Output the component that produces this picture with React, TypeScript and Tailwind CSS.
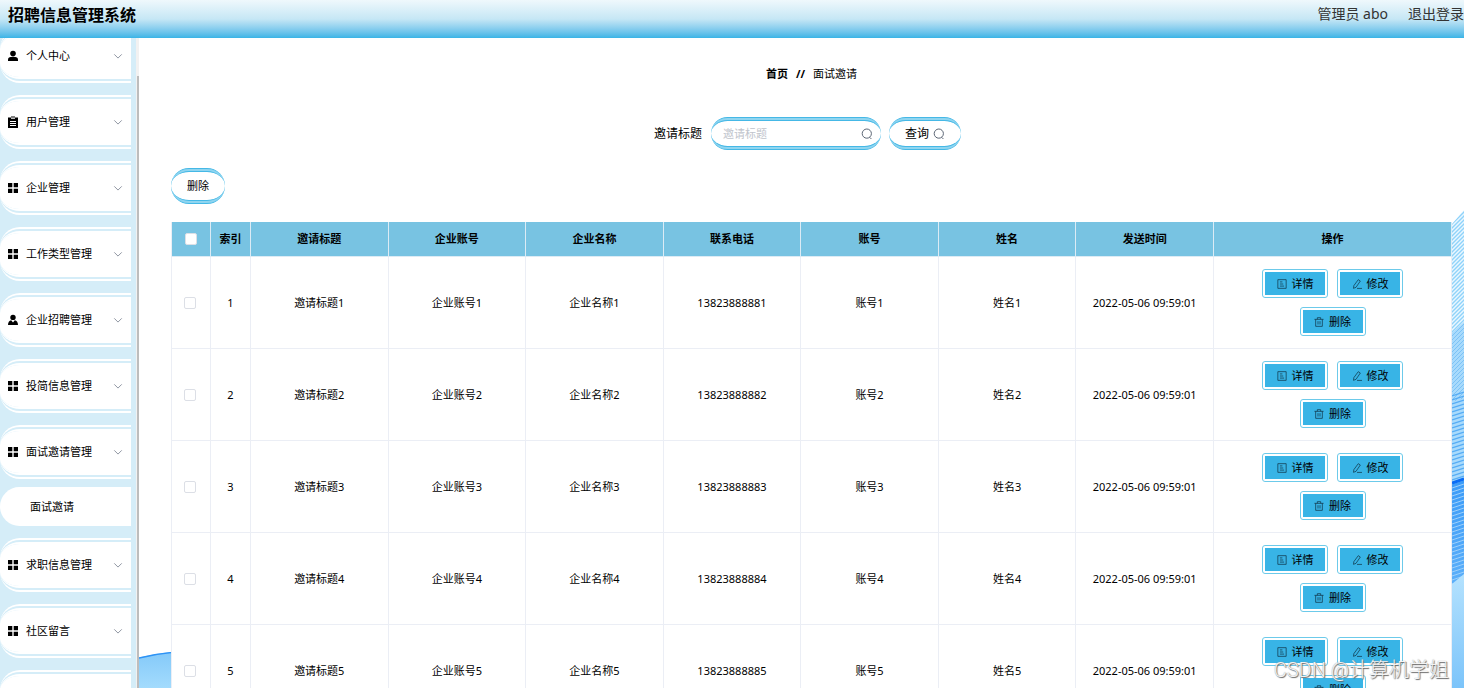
import type { ReactNode } from 'react';

type IconName = 'user' | 'order' | 'menu' | 'custom';

interface MenuEntry {
  title: string;
  icon: IconName;
  children?: string[];
}

const menu: MenuEntry[] = [
  { title: '个人中心', icon: 'user' },
  { title: '用户管理', icon: 'order' },
  { title: '企业管理', icon: 'menu' },
  { title: '工作类型管理', icon: 'menu' },
  { title: '企业招聘管理', icon: 'custom' },
  { title: '投简信息管理', icon: 'menu' },
  { title: '面试邀请管理', icon: 'menu', children: ['面试邀请'] },
  { title: '求职信息管理', icon: 'menu' },
  { title: '社区留言', icon: 'menu' },
];

const columns = ['邀请标题', '企业账号', '企业名称', '联系电话', '账号', '姓名', '发送时间'];

const rows = [1, 2, 3, 4, 5].map((n) => ({
  id: n,
  cells: [`邀请标题${n}`, `企业账号${n}`, `企业名称${n}`, `1382388888${n}`, `账号${n}`, `姓名${n}`, '2022-05-06 09:59:01'],
}));

// double blue rails above and below, with a paler blue between them
const railed =
  'rounded-[20px] border-y-4 border-double border-[#45b8e6] [background:linear-gradient(#fff,#fff)_padding-box,linear-gradient(#8fd5f0,#8fd5f0)_border-box]';

function MenuIcon({ name }: { name: IconName }) {
  return (
    <svg className="w-3 h-3 shrink-0" viewBox="0 0 12 12" fill="currentColor" aria-hidden="true">
      {name === 'user' && (
        <>
          <circle cx="6" cy="3.6" r="2.8" />
          <path d="M1 11V9.4C1 8 2.2 7 3.6 7h4.8C9.8 7 11 8 11 9.4V11z" />
        </>
      )}
      {name === 'custom' && (
        <>
          <circle cx="6" cy="3.4" r="2.7" />
          <path d="M1 11c0-2.8 1.2-4.4 3.2-4.8L6 8.4l1.8-2.2C9.8 6.6 11 8.2 11 11z" />
        </>
      )}
      {name === 'order' && (
        <path fillRule="evenodd" d="M4 .5h4v1h3V12H1V1.5h3zM4 1.5v1.3h4V1.5zM3 5v1h6V5zM3 7v1h6V7zM3 9v1h6V9z" />
      )}
      {name === 'menu' && <path d="M1 1h4.3v4.3H1zM6.7 1H11v4.3H6.7zM1 6.7h4.3V11H1zM6.7 6.7H11V11H6.7z" />}
    </svg>
  );
}

function LineIcon({ children, className = 'w-3 h-3' }: { children: ReactNode; className?: string }) {
  return (
    <svg className={className} viewBox="0 0 12 12" fill="none" stroke="currentColor" strokeWidth="0.9" aria-hidden="true">
      {children}
    </svg>
  );
}

function SearchIcon() {
  return (
    <LineIcon className="w-3 h-3 shrink-0 text-gray-600">
      <circle cx="5.8" cy="5.6" r="4.6" />
      <path d="M8.8 9.4l1.6 1.6" />
    </LineIcon>
  );
}

function ActionButton({ label, children }: { label: string; children: ReactNode }) {
  return (
    <button className="h-[29px] w-[66px] rounded-[3px] border border-[#6ccaea] bg-white p-[2px]">
      <span className="flex h-full w-full items-center justify-center gap-[5px] bg-[#38b4e6]">
        <LineIcon className="w-[10px] h-[10px] text-[#12394b]">{children}</LineIcon>
        {label}
      </span>
    </button>
  );
}

function Backdrop() {
  return (
    <>
      <svg className="absolute bottom-0 left-0 h-9 w-8" viewBox="0 0 32 36" preserveAspectRatio="none" aria-hidden="true">
        <defs>
          <linearGradient id="wave" x1="0" y1="0" x2="0" y2="1">
            <stop offset="0" stopColor="#84c9f9" />
            <stop offset="1" stopColor="#a3dbfd" />
          </linearGradient>
        </defs>
        <path d="M0 5.5Q16 1.5 32 0V36H0z" fill="url(#wave)" />
        <path d="M0 6Q16 2 32 0.6" fill="none" stroke="#2d92f5" strokeWidth="1.4" />
      </svg>
      <svg className="absolute right-0 bottom-0 h-[480px] w-3" viewBox="0 0 12 480" preserveAspectRatio="none" aria-hidden="true">
        <defs>
          <pattern id="hatch" width="4" height="4" patternUnits="userSpaceOnUse">
            <path d="M-1 1L1 -1M0 4L4 0M3 5L5 3" stroke="#8fd3fa" strokeWidth="1.4" />
          </pattern>
          <pattern id="mesh" width="4" height="4" patternUnits="userSpaceOnUse">
            <path d="M-1 1L1 -1M0 4L4 0M3 5L5 3" stroke="#7cc2f6" strokeWidth="1" />
          </pattern>
          <pattern id="ripple" width="12" height="4" patternUnits="userSpaceOnUse">
            <path d="M0 4L12 0M0 8L12 4M0 0L12 -4" stroke="#55acf5" strokeWidth="1.2" />
          </pattern>
          <pattern id="glint" width="12" height="4" patternUnits="userSpaceOnUse">
            <path d="M0 4L12 0M0 8L12 4M0 0L12 -4" stroke="#9ccffb" strokeWidth="1" />
          </pattern>
          <linearGradient id="deep" x1="0" y1="0" x2="0" y2="1">
            <stop offset="0" stopColor="#3b9bf8" />
            <stop offset="1" stopColor="#7cc3fb" />
          </linearGradient>
          <linearGradient id="pale" x1="0" y1="0" x2="0" y2="1">
            <stop offset="0" stopColor="#b5e2fe" />
            <stop offset="1" stopColor="#7cc4fa" />
          </linearGradient>
        </defs>
        <path d="M0 16L12 2V480H0z" fill="#eaf7ff" />
        <path d="M0 16L12 2V480H0z" fill="url(#hatch)" />
        <path d="M0 125L12 114V480H0z" fill="#a8dafc" />
        <path d="M0 125L12 114V190L0 194z" fill="url(#mesh)" />
        <path d="M0 186L12 182V480H0z" fill="url(#ripple)" />
        <path d="M0 275L12 270V480H0z" fill="url(#deep)" />
        <path d="M0 275L12 270V480H0z" fill="url(#glint)" />
        <path d="M0 275L12 271" stroke="#0a6cf5" strokeWidth="3" />
        <path d="M0 376L12 366V480H0z" fill="url(#pale)" />
      </svg>
    </>
  );
}

function Sidebar() {
  return (
    <aside className="flex shrink-0 overflow-hidden bg-[#d5edf8]">
      <ul className="-mt-[9px] flex w-[131px] flex-col gap-3">
        {menu.map((item) => (
          <li key={item.title}>
            <button className="flex h-[54px] w-full items-center rounded-l-[20px] border-y-[6px] border-double border-white bg-white bg-clip-padding pr-2 pl-[7px]">
              <MenuIcon name={item.icon} />
              <span className="ml-[7px] flex-1 text-left">{item.title}</span>
              <LineIcon className="w-[10px] h-[10px] text-gray-500">
                <path d="M1.5 4L6 8.5L10.5 4" />
              </LineIcon>
            </button>
            {item.children?.map((child) => (
              <a key={child} href="#" className="mt-2 flex h-[39px] items-center rounded-l-[20px] bg-white pl-[30px]">
                {child}
              </a>
            ))}
          </li>
        ))}
        <li className="h-[54px] shrink-0 rounded-l-[20px] border-y-[6px] border-double border-white bg-white bg-clip-padding" />
      </ul>
      <div className="ml-[5px] w-[3px] bg-[#f1f1f1] pt-[38px]">
        <div className="ml-px h-full bg-[#bdbdbd]" />
      </div>
    </aside>
  );
}

export default function App() {
  return (
    <div className="flex h-screen flex-col overflow-hidden bg-white font-['Noto_Sans','Noto_Sans_CJK_SC',sans-serif] text-[11px] leading-4 text-black">
      <header className="flex h-[38px] shrink-0 items-start justify-between bg-linear-to-b from-[#eff8fc] via-[#c6e7f5] to-[#38b4e6] pt-[3px] pl-2">
        <h1 className="text-base leading-6 font-bold">招聘信息管理系统</h1>
        <div className="flex gap-5 text-sm leading-[22px] text-[#333]">
          <span>管理员 abo</span>
          <a href="#">退出登录</a>
        </div>
      </header>

      <div className="flex min-h-0 flex-1">
        <Sidebar />
        <main className="relative min-w-0 flex-1 overflow-hidden">
          <Backdrop />
          <div className="relative pr-3 pl-8">
            <nav className="flex justify-center gap-2 pt-7">
              <a href="#" className="font-bold">首页</a>
              <span className="font-bold">//</span>
              <span>面试邀请</span>
            </nav>

            <form className="mt-[35px] flex items-center justify-center pr-2" onSubmit={(e) => e.preventDefault()}>
              <label htmlFor="title" className="mr-[9px] text-xs">邀请标题</label>
              <div className={`mr-2 flex h-[33px] w-[170px] items-center pr-2 pl-3 ${railed}`}>
                <input
                  id="title"
                  placeholder="邀请标题"
                  className="min-w-0 flex-1 bg-transparent outline-none placeholder:text-[#c0c4cc]"
                />
                <SearchIcon />
              </div>
              <button className={`flex h-[33px] w-[72px] items-center justify-center gap-1 pt-px text-xs ${railed}`}>
                查询
                <SearchIcon />
              </button>
            </form>

            <button className={`mt-[18px] block h-9 w-[54px] ${railed}`}>删除</button>

            <table className="mt-[18px] w-full table-fixed border-separate border-spacing-0 border-l border-[#ebeef5] bg-white text-center">
              <colgroup>
                <col className="w-[39px]" />
                <col className="w-10" />
                {columns.map((c) => (
                  <col key={c} />
                ))}
                <col className="w-[238px]" />
              </colgroup>
              <thead>
                <tr className="h-[35px] bg-[#78c3e2]">
                  <th className="border-r border-b border-[#dcebf5]">
                    <input
                      type="checkbox"
                      aria-label="全选"
                      className="block mx-auto h-3 w-3 appearance-none rounded-[2px] border border-[#dcdfe6] bg-white"
                    />
                  </th>
                  <th className="border-r border-b border-[#dcebf5] font-bold">索引</th>
                  {columns.map((c) => (
                    <th key={c} className="border-r border-b border-[#dcebf5] font-bold">{c}</th>
                  ))}
                  <th className="border-r border-b border-[#dcebf5] font-bold">操作</th>
                </tr>
              </thead>
              <tbody>
                {rows.map((row) => (
                  <tr key={row.id} className="h-[92px]">
                    <td className="border-r border-b border-[#ebeef5]">
                      <input
                        type="checkbox"
                        aria-label={`选择${row.id}`}
                        className="ml-3 block h-3 w-3 appearance-none rounded-[2px] border border-[#dcdfe6] bg-white"
                      />
                    </td>
                    <td className="border-r border-b border-[#ebeef5]">{row.id}</td>
                    {row.cells.map((cell, i) => (
                      <td key={i} className="border-r border-b border-[#ebeef5]">{cell}</td>
                    ))}
                    <td className="border-r border-b border-[#ebeef5]">
                      <div className="flex flex-wrap justify-center gap-[9px] px-10">
                        <ActionButton label="详情">
                          <path d="M1 .8h10v10.4H1zM3.5 3.5h3M3.5 6h4M3.5 8.5h5" />
                        </ActionButton>
                        <ActionButton label="修改">
                          <path d="M7.500 .8l2.500 1.600L4.800 10l-3 1.200 .4-3.200zM6 11.300h6" />
                        </ActionButton>
                        <ActionButton label="删除">
                          <path d="M.5 2.8h11M4 2.800V.8h4v2M2 2.800v8.400h8V2.800M4.800 5v4M7.200 5v4" />
                        </ActionButton>
                      </div>
                    </td>
                  </tr>
                ))}
              </tbody>
            </table>
          </div>
          <div className="pointer-events-none absolute right-[15px] bottom-1 font-['Roboto','Noto_Sans_CJK_SC',sans-serif] text-xl leading-7 font-light text-white/90 [text-shadow:1px_1px_1px_#666,0_0_1px_#888]">
            CSDN @计算机学姐
          </div>
        </main>
      </div>
    </div>
  );
}
